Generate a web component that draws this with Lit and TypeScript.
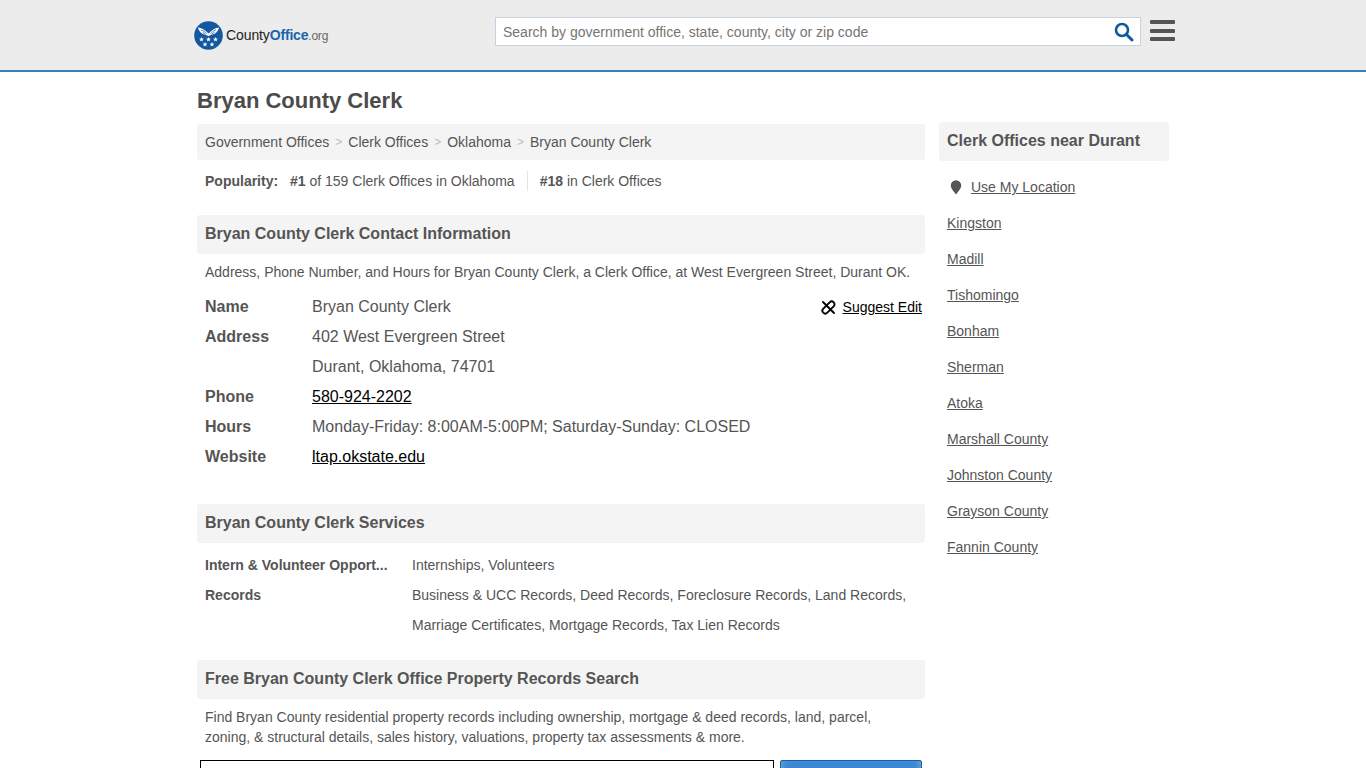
import { LitElement, html, css } from 'lit';
import { customElement } from 'lit/decorators.js';

const crumbs = ['Government Offices', 'Clerk Offices', 'Oklahoma', 'Bryan County Clerk'];
const nearby = ['Kingston', 'Madill', 'Tishomingo', 'Bonham', 'Sherman', 'Atoka', 'Marshall County', 'Johnston County', 'Grayson County', 'Fannin County'];

const star = (x: number, y: number) => {
  const pts: string[] = [];
  for (let i = 0; i < 10; i++) {
    const r = i % 2 ? 1.1 : 2.6;
    const a = (Math.PI / 5) * i - Math.PI / 2;
    pts.push(`${(x + r * Math.cos(a)).toFixed(2)},${(y + r * Math.sin(a)).toFixed(2)}`);
  }
  return pts.join(' ');
};

@customElement('app-root')
export class AppRoot extends LitElement {
  static styles = css`
    :host {
      display: block;
      height: 768px;
      overflow: hidden;
      background: #fff;
      color: #555;
      font-family: 'Liberation Sans', Arial, sans-serif;
      font-size: 14px;
    }
    a { color: inherit; }
    .header {
      height: 70px;
      background: #ececec;
      border-bottom: 2px solid #3d80b8;
    }
    .header-inner {
      width: 972px;
      margin: 0 auto;
      height: 70px;
      display: flex;
      align-items: center;
    }
    .logo {
      display: flex;
      flex: none;
      align-items: center;
      margin-left: -3px;
      width: 301px;
      color: #222;
      font-size: 14px;
      letter-spacing: -0.1px;
    }
    .logo svg { margin-right: 3px; }
    .logo b { color: #1c64ae; letter-spacing: -0.2px; }
    .logo i { font-style: normal; color: #666; font-size: 12px; letter-spacing: -0.2px; }
    .search {
      box-sizing: border-box;
      flex: none;
      width: 646px;
      height: 29px;
      margin-top: -7px;
      background: #fff;
      border: 1px solid #c5d3e0;
      display: flex;
      align-items: center;
      justify-content: space-between;
      padding: 0 6px 0 7px;
      color: #757575;
    }
    .search svg { display: block; }
    .burger {
      flex: none;
      margin: -9px 0 0 9px;
      width: 25px;
      display: flex;
      flex-direction: column;
      gap: 4.5px;
    }
    .burger span { display: block; height: 4px; background: #555; border-radius: 1px; }
    .page {
      width: 972px;
      margin: 0 auto;
    }
    h1 {
      margin: 0;
      height: 52px;
      line-height: 58px;
      font-size: 22px;
      color: #4b4b4b;
    }
    .cols {
      display: flex;
      gap: 14px;
      align-items: flex-start;
    }
    .main { width: 728px; flex: none; }
    .aside { width: 230px; flex: none; margin-top: -2px; }
    .crumbs {
      height: 36px;
      background: #f4f4f4;
      border-radius: 3px;
      padding-left: 8px;
      display: flex;
      align-items: center;
    }
    .crumbs em { font-style: normal; color: #bbb; margin: 0 6px; font-size: 12px; }
    .pop {
      height: 24px;
      margin-top: 9px;
      padding-left: 8px;
      display: flex;
      align-items: center;
    }
    .pop .label { font-weight: 700; width: 85px; }
    .pop .sep { width: 1px; height: 20px; background: #e4e4e4; margin: 0 12px; }
    .head {
      height: 39px;
      box-sizing: border-box;
      background: #f4f4f4;
      border-radius: 3px;
      padding-left: 8px;
      line-height: 37px;
      font-size: 16px;
      font-weight: 700;
    }
    .first { margin-top: 22px; }
    .desc { padding: 8px 8px 0; line-height: 20px; }
    .contact {
      position: relative;
      margin-top: 10px;
      padding-left: 8px;
      font-size: 16px;
      line-height: 30px;
    }
    .row { display: flex; height: 30px; }
    .row .k { width: 107px; flex: none; font-weight: 700; }
    .row a { color: #000; }
    .suggest {
      position: absolute;
      right: 3px;
      top: 0;
      display: flex;
      align-items: center;
      font-size: 14px;
      color: #000;
    }
    .suggest svg { margin-right: 7px; }
    .services { margin-top: 7px; padding-left: 8px; line-height: 30px; }
    .srow { display: flex; }
    .srow .k {
      width: 187px;
      margin-right: 20px;
      flex: none;
      font-weight: 700;
      white-space: nowrap;
    }
    .mt32 { margin-top: 32px; }
    .mt20 { margin-top: 20px; }
    .form { display: flex; margin: 13px 0 0 3px; gap: 6px; }
    .form .in {
      width: 574px;
      height: 40px;
      box-sizing: border-box;
      border: 1px solid #000;
      background: #fff;
    }
    .form .btn {
      width: 142px;
      height: 40px;
      box-sizing: border-box;
      border: 1px solid #1a5f9e;
      background: linear-gradient(#3d8ad6, #2a78c8);
      box-shadow: inset 6px 0 6px -5px #7fa9cf, inset -6px 0 6px -5px #7fa9cf;
      border-radius: 2px;
    }
    .aside .head { padding-left: 8px; }
    .near {
      list-style: none;
      margin: 8px 0 0;
      padding: 0 0 0 8px;
      line-height: 36px;
    }
    .near li { height: 36px; }
    .loc { display: flex; align-items: center; }
    .loc svg { margin: 0 9px 0 3px; }
  `;

  render() {
    return html`
      <div class="header">
        <div class="header-inner">
          <div class="logo">
            <svg width="29" height="29" viewBox="0 0 29 29">
              <circle cx="14.5" cy="14.5" r="14.3" fill="#14599f"></circle>
              <path d="M4 6.5c3.200.6 6 1.800 8 3.700l2.500 2.200 2.500-2.200c2-1.900 4.800-3.100 8-3.700-.5 2.300-1.600 4.100-3.200 5.400-1 .9-2.200 1.400-3.400 1.600l-3.900 1.400-3.900-1.400c-1.200-.2-2.400-.7-3.400-1.600C5.600 10.600 4.500 8.800 4 6.500z" fill="#fff"></path>
              <path d="M7 8.800c2.200.8 4 2 5.500 3.700M22 8.800c-2.200.8-4 2-5.500 3.700M8.500 11.500c1.200.4 2.300 1.100 3.200 2M20.500 11.500c-1.200.4-2.300 1.100-3.200 2" stroke="#14599f" stroke-width=".7" fill="none"></path>
              <polygon points="${star(7.5, 18.5)}" fill="#fff"></polygon>
              <polygon points="${star(14.5, 18.5)}" fill="#fff"></polygon>
              <polygon points="${star(21.5, 18.5)}" fill="#fff"></polygon>
              <polygon points="${star(11, 23.5)}" fill="#fff"></polygon>
              <polygon points="${star(18, 23.5)}" fill="#fff"></polygon>
            </svg>
            <span>County<b>Office</b><i>.org</i></span>
          </div>
          <div class="search">
            <span>Search by government office, state, county, city or zip code</span>
            <svg width="20" height="20" viewBox="0 0 20 20" fill="none" stroke="#0f5a9c">
              <circle cx="8" cy="8" r="6" stroke-width="2.6"></circle>
              <path d="M12.500 12.500l5.500 5.500" stroke-width="3" stroke-linecap="round"></path>
            </svg>
          </div>
          <div class="burger"><span></span><span></span><span></span></div>
        </div>
      </div>
      <div class="page">
        <h1>Bryan County Clerk</h1>
        <div class="cols">
          <div class="main">
            <div class="crumbs">
              ${crumbs.map((c, i) => html`${i ? html`<em>&gt;</em>` : ''}<span>${c}</span>`)}
            </div>
            <div class="pop">
              <span class="label">Popularity:</span>
              <span><b>#1</b> of 159 Clerk Offices in Oklahoma</span>
              <span class="sep"></span>
              <span><b>#18</b> in Clerk Offices</span>
            </div>
            <div class="head first">Bryan County Clerk Contact Information</div>
            <div class="desc">Address, Phone Number, and Hours for Bryan County Clerk, a Clerk Office, at West Evergreen Street, Durant OK.</div>
            <div class="contact">
              <div class="row"><span class="k">Name</span><span>Bryan County Clerk</span></div>
              <div class="row"><span class="k">Address</span><span>402 West Evergreen Street</span></div>
              <div class="row"><span class="k"></span><span>Durant, Oklahoma, 74701</span></div>
              <div class="row"><span class="k">Phone</span><a href="#">580-924-2202</a></div>
              <div class="row"><span class="k">Hours</span><span>Monday-Friday: 8:00AM-5:00PM; Saturday-Sunday: CLOSED</span></div>
              <div class="row"><span class="k">Website</span><a href="#">ltap.okstate.edu</a></div>
              <div class="suggest">
                <svg width="15" height="15" viewBox="0 0 15 15" fill="none" stroke="#000" stroke-width="1.9" stroke-linecap="round">
                  <path d="M5.800 5.200 8.700 2.300a2.800 2.800 0 0 1 4 4L9.800 9.200"></path>
                  <path d="M9.200 9.800 6.300 12.700a2.800 2.800 0 0 1-4-4L5.200 5.800"></path>
                  <path d="M2 2l11 11"></path>
                </svg>
                <a href="#">Suggest Edit</a>
              </div>
            </div>
            <div class="head mt32">Bryan County Clerk Services</div>
            <div class="services">
              <div class="srow"><span class="k">Intern &amp; Volunteer Opport...</span><span>Internships, Volunteers</span></div>
              <div class="srow"><span class="k">Records</span><span>Business &amp; UCC Records, Deed Records, Foreclosure Records, Land Records,<br />Marriage Certificates, Mortgage Records, Tax Lien Records</span></div>
            </div>
            <div class="head mt20">Free Bryan County Clerk Office Property Records Search</div>
            <div class="desc">Find Bryan County residential property records including ownership, mortgage &amp; deed records, land, parcel,<br />zoning, &amp; structural details, sales history, valuations, property tax assessments &amp; more.</div>
            <div class="form"><div class="in"></div><div class="btn"></div></div>
          </div>
          <div class="aside">
            <div class="head">Clerk Offices near Durant</div>
            <ul class="near">
              <li class="loc">
                <svg width="12" height="15" viewBox="0 0 12 15"><path d="M6 14.500C3 10.500.8 8.300.8 5.500a5.200 5.200 0 0 1 10.400 0c0 2.800-2.200 5-5.200 9z" fill="#555"></path></svg>
                <a href="#">Use My Location</a>
              </li>
              ${nearby.map((n) => html`<li><a href="#">${n}</a></li>`)}
            </ul>
          </div>
        </div>
      </div>
    `;
  }
}
